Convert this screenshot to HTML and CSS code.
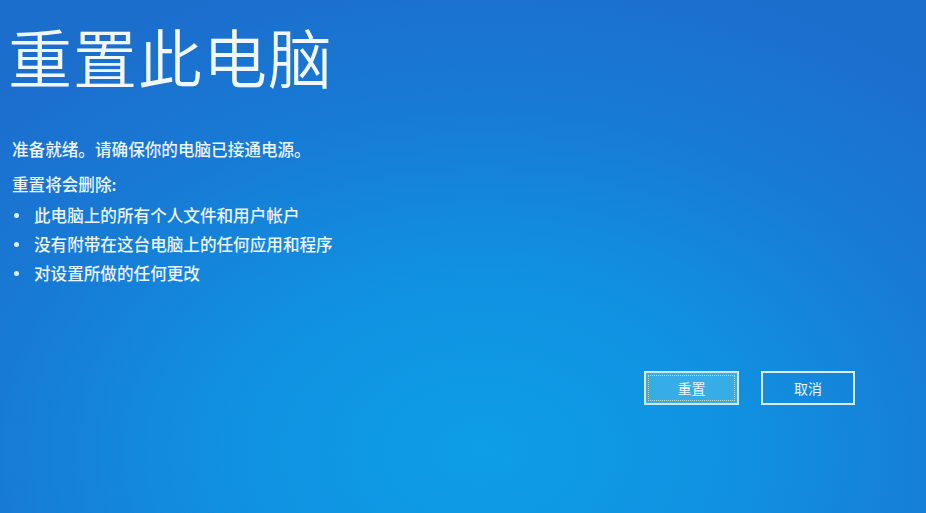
FILE: index.html
```html
<!DOCTYPE html>
<html lang="zh-CN">
<head>
<meta charset="utf-8">
<title>重置此电脑</title>
<link rel="stylesheet" href="styles.css">
</head>
<body>
<main class="screen">
  <h1 class="title">重置此电脑</h1>
  <p class="ready">准备就绪。请确保你的电脑已接通电源。</p>
  <p class="lead">重置将会删除:</p>
  <ul class="list">
    <li>此电脑上的所有个人文件和用户帐户</li>
    <li>没有附带在这台电脑上的任何应用和程序</li>
    <li>对设置所做的任何更改</li>
  </ul>
  <div class="actions">
    <button class="btn btn-primary"><span class="focus">重置</span></button>
    <button class="btn btn-secondary">取消</button>
  </div>
</main>
</body>
</html>
```
FILE: styles.css
```css
html, body {
  margin: 0;
  height: 100%;
}
body {
  background: radial-gradient(ellipse 75% 95% at 52% 88%, #0d9ee7 0%, #1092e1 35%, #177bd5 70%, #1c6ecd 100%);
  color: #eaf5fd;
  font-family: "Noto Sans CJK SC", "Noto Sans", sans-serif;
  overflow: hidden;
}
.screen {
  display: flex;
  flex-direction: column;
  padding: 15px 71px 0 8px;
  height: 100%;
  box-sizing: border-box;
}
.title {
  margin: 0;
  font-size: 64px;
  font-weight: 350;
  line-height: 80px;
  letter-spacing: 1px;
  color: #f1f8fd;
}
.ready {
  margin: 42px 0 0 4px;
  font-size: 16.6px;
  line-height: 24px;
  font-weight: 500;
}
.lead {
  margin: 11px 0 0 4px;
  font-size: 16.6px;
  line-height: 24px;
  font-weight: 500;
}
.list {
  list-style: none;
  margin: 5px 0 0 0;
  padding: 0;
}
.list li {
  display: flex;
  align-items: center;
  font-size: 16.6px;
  line-height: 29px;
  font-weight: 500;
}
.list li::before {
  content: "";
  width: 5px;
  height: 5px;
  border-radius: 50%;
  background: #d9eefb;
  margin: 0 15px 0 6px;
}
.actions {
  display: flex;
  justify-content: flex-end;
  gap: 22px;
  margin-top: 83px;
}
.btn {
  width: 95px;
  height: 34px;
  box-sizing: border-box;
  border: 2px solid #d6ecfa;
  background: transparent;
  color: #eaf5fd;
  font-family: "Noto Sans CJK SC", sans-serif;
  font-size: 14px;
  padding: 0;
  display: flex;
  align-items: center;
  justify-content: center;
}
.btn-secondary {
  width: 94px;
}
.btn-primary {
  background: #36ade7;
  border-color: #cfe9f3;
  padding: 2px;
}
.btn-primary .focus {
  flex: 1;
  align-self: stretch;
  display: flex;
  align-items: center;
  justify-content: center;
  border: 1px dotted #b9d8c9;
}
```
